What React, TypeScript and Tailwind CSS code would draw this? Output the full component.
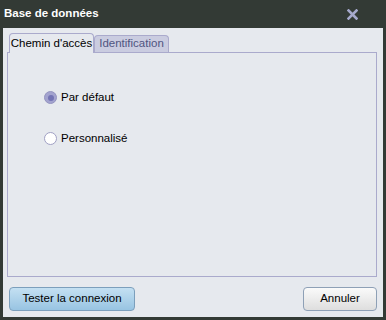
import React from "react";

export default function App() {
  return (
    <div
      className="w-[386px] h-[320px] bg-[#333a35] flex flex-col text-[11px]"
      style={{ fontFamily: "'Liberation Sans', Arial, sans-serif" }}
    >
      <div className="h-[28px] flex items-center justify-between pl-[4px] pr-[28px]">
        <span className="text-white font-bold text-[11.5px]">Base de données</span>
        <svg width="11" height="11" viewBox="0 0 11 11">
          <path d="M1.5 1.5 L9.5 9.5 M9.5 1.5 L1.5 9.5" stroke="#a6a9cc" strokeWidth="2.6" strokeLinecap="square" />
        </svg>
      </div>
      <div className="mx-[3px] mb-[3px] flex-1 bg-[#e6e9ee] flex flex-col pt-[4px] pl-[4px] pr-[6px]">
        <div className="flex items-end h-[20px]">
          <div className="ml-[2px] h-[20px] w-[85px] shrink-0 whitespace-nowrap justify-center border border-b-0 border-[#aaaacc] rounded-t-[4px] bg-[#e6e9ee] flex items-center text-black text-[11.5px] relative top-[1px] z-10">
            Chemin d'accès
          </div>
          <div className="h-[17px] w-[75px] shrink-0 whitespace-nowrap justify-center border border-b-0 border-[#aaaacc] rounded-t-[4px] bg-[#cacce0] flex items-center text-[#505580] text-[11.5px]">
            Identification
          </div>
        </div>
        <div className="h-[225px] border border-[#aaaacc] flex flex-col pl-[36px] pt-[38px] gap-[28px]">
          <div className="flex items-center gap-[4px] h-[13px]">
            <div className="w-[13px] h-[13px] rounded-full bg-[#a3a3cf] border border-[#9494c0] flex items-center justify-center">
              <div className="w-[6px] h-[6px] rounded-full bg-[#7474b4]" />
            </div>
            <span className="text-black text-[11.5px]">Par défaut</span>
          </div>
          <div className="flex items-center gap-[4px] h-[13px]">
            <div className="w-[13px] h-[13px] rounded-full bg-white border border-[#a0a0c4]" />
            <span className="text-black text-[11.5px]">Personnalisé</span>
          </div>
        </div>
        <div className="flex justify-between items-center mt-[10px] pl-[2px]">
          <button className="w-[126px] h-[24px] rounded-[4px] border border-[#7c9fbc] bg-gradient-to-b from-[#c4e0f2] to-[#98c4e2] text-black text-[11.5px]">
            Tester la connexion
          </button>
          <button className="w-[74px] h-[24px] rounded-[4px] border border-[#8ea0b6] bg-gradient-to-b from-[#fafafa] to-[#dedede] text-black text-[11.5px]">
            Annuler
          </button>
        </div>
      </div>
    </div>
  );
}
